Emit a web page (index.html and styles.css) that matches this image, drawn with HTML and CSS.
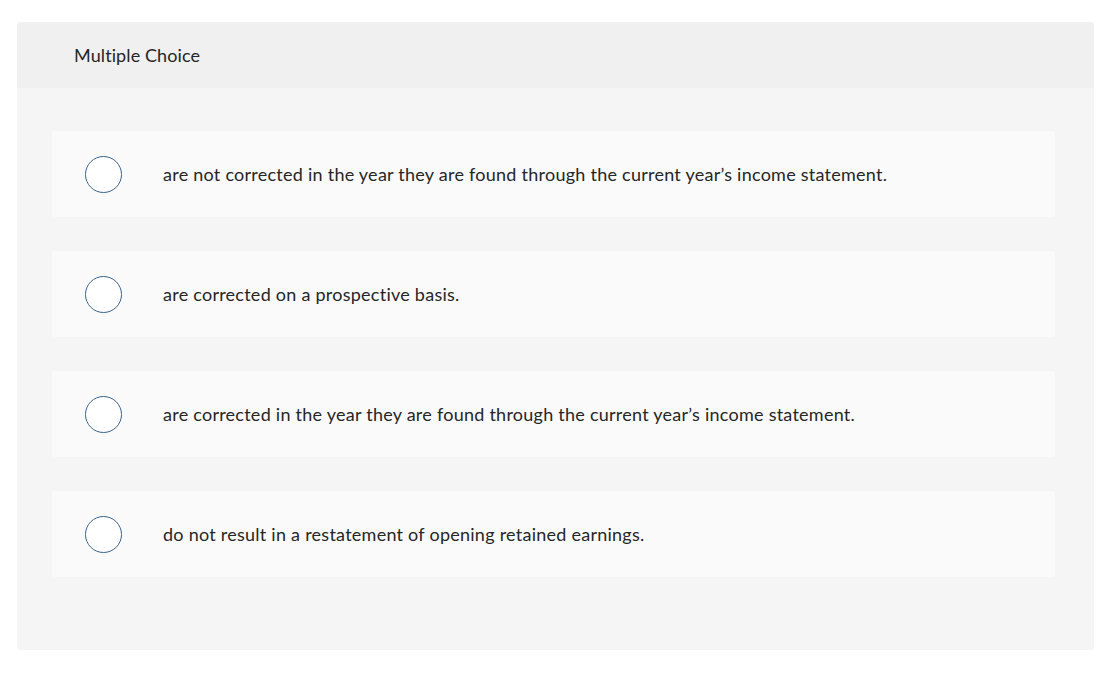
FILE: index.html
```html
<!DOCTYPE html>
<html>
<head>
<meta charset="utf-8">
<link rel="stylesheet" href="styles.css">
</head>
<body>
<div class="card">
  <div class="card-header">Multiple Choice</div>
  <div class="card-body">
    <div class="option"><span class="radio"></span><span class="label">are not corrected in the year they are found through the current year’s income statement.</span></div>
    <div class="option"><span class="radio"></span><span class="label">are corrected on a prospective basis.</span></div>
    <div class="option"><span class="radio"></span><span class="label">are corrected in the year they are found through the current year’s income statement.</span></div>
    <div class="option"><span class="radio"></span><span class="label">do not result in a restatement of opening retained earnings.</span></div>
  </div>
</div>
</body>
</html>
```
FILE: styles.css
```css
html, body { margin: 0; padding: 0; background: #fff; }
body {
  padding: 22px 19px 0 17px;
  font-family: Lato, "Liberation Sans", sans-serif;
  color: #262626;
}
.card {
  border-radius: 4px;
  overflow: hidden;
  background: #f5f5f5;
  height: 628px;
  display: flex;
  flex-direction: column;
}
.card-header {
  background: #f0f0f0;
  height: 66px;
  box-sizing: border-box;
  padding-left: 57px;
  display: flex;
  align-items: center;
  font-size: 18px;
  letter-spacing: 0.1px;
}
.card-body {
  padding: 43px 39px 0 35px;
  display: flex;
  flex-direction: column;
  gap: 34px;
}
.option {
  background: #fafafa;
  border-radius: 3px;
  height: 86px;
  display: flex;
  align-items: center;
  padding-left: 33px;
  gap: 41px;
}
.radio {
  width: 35px;
  height: 35px;
  border: 1.3px solid #3a6391;
  border-radius: 50%;
  background: #fff;
  flex: none;
}
.label {
  font-size: 18px;
  letter-spacing: 0.25px;
}
```
